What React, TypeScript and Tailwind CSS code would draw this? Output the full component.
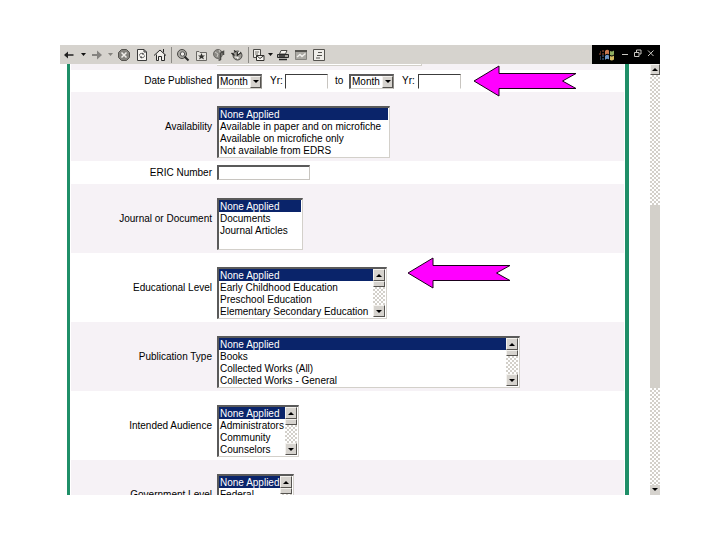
import React from "react";

const dither =
  "bg-[conic-gradient(#d3d0ca_25%,#ffffff_0_50%,#d3d0ca_0_75%,#ffffff_0)] bg-[length:4px_4px]";

function Caret({ up = false }: { up?: boolean }) {
  return (
    <svg viewBox="0 0 6 3" className="h-[3px] w-[6px]" aria-hidden="true">
      <path d={up ? "M3 0L6 3H0Z" : "M0 0H6L3 3Z"} fill="#000" />
    </svg>
  );
}

const bevel =
  "flex items-center justify-center bg-[#d6d3ce] border border-t-[#f4f2ee] border-l-[#f4f2ee] border-b-[#55534f] border-r-[#55534f]";

function ListScroll() {
  return (
    <div className="flex w-3 shrink-0 flex-col">
      <button type="button" aria-label="Scroll up" className={`h-3 w-3 ${bevel}`}>
        <Caret up />
      </button>
      <div className={`h-[6px] ${bevel}`} />
      <div className={`flex-1 ${dither}`} />
      <button type="button" aria-label="Scroll down" className={`h-3 w-3 ${bevel}`}>
        <Caret />
      </button>
    </div>
  );
}

type ListProps = { id: string; options: string[]; width: string; scroll?: boolean };

function ListBox({ id, options, width, scroll = false }: ListProps) {
  return (
    <div
      className={`mt-[14px] mb-[3px] flex h-[52px] border border-t-2 border-l-2 border-t-[#5a5a5a] border-l-[#5a5a5a] border-r-[#d3d0ca] border-b-[#d3d0ca] bg-white pr-px pb-px ${width}`}
    >
      <select
        id={id}
        size={4}
        defaultValue={options[0]}
        className="h-12 min-w-0 flex-1 appearance-none overflow-hidden bg-white p-0 text-[10px] leading-3 text-black outline-none"
      >
        {options.map((o) => (
          <option
            key={o}
            value={o}
            className="h-3 min-h-0 px-px pt-px pb-0 leading-[11px] checked:bg-[#0a246a] checked:text-white"
          >
            {o}
          </option>
        ))}
      </select>
      {scroll && <ListScroll />}
    </div>
  );
}

type RowProps = {
  label: string;
  id: string;
  tinted?: boolean;
  className?: string;
  children: React.ReactNode;
};

function Row({ label, id, tinted = false, className = "", children }: RowProps) {
  return (
    <div
      className={`relative mx-px flex shrink-0 items-center gap-[5px] ${tinted ? "bg-[#f6f2f6]" : "bg-white"} ${className}`}
    >
      <label htmlFor={id} className="w-[141px] shrink-0 text-right whitespace-nowrap">
        {label}
      </label>
      {children}
    </div>
  );
}

function MonthSelect({ id, label }: { id: string; label: string }) {
  return (
    <div className="flex h-[15px] w-[45px] border border-t-2 border-l-2 border-t-[#5a5a5a] border-l-[#5a5a5a] border-r-[#8c8a86] border-b-[#d3d0ca] bg-white">
      <select
        id={id}
        aria-label={label}
        className="min-w-0 flex-1 appearance-none bg-white pl-px text-[10px] leading-3 outline-none"
      >
        <option>Month</option>
      </select>
      <span className={`w-[11px] shrink-0 ${bevel}`}>
        <Caret />
      </span>
    </div>
  );
}

function YearInput({ id }: { id: string }) {
  return (
    <input
      id={id}
      className="h-[15px] w-[43px] border border-t-[#3c3c3c] border-l-[#3c3c3c] border-r-[#c8c5c0] border-b-white bg-white px-px outline-none"
    />
  );
}

function Pointer({ className }: { className: string }) {
  return (
    <svg viewBox="0 0 104 32" className={`absolute z-10 h-8 w-[104px] ${className}`} aria-hidden="true">
      <path
        d="M1 16L26 1V8.500H103L89.500 16L103 23.500H26V31Z"
        fill="#ff00ff"
        stroke="#1a001a"
        strokeWidth="1"
      />
    </svg>
  );
}

function Tool({
  label,
  width = "w-[18px]",
  children,
}: {
  label: string;
  width?: string;
  children: React.ReactNode;
}) {
  return (
    <button type="button" aria-label={label} className={`flex h-full shrink-0 items-center justify-center ${width}`}>
      {children}
    </button>
  );
}

function Glyph({ children }: { children: React.ReactNode }) {
  return (
    <svg viewBox="0 0 14 14" className="h-[14px] w-[14px]" fill="none" aria-hidden="true">
      {children}
    </svg>
  );
}

function SmallCaret({ color }: { color: string }) {
  return (
    <svg viewBox="0 0 5 3" className="h-[3px] w-[5px]" aria-hidden="true">
      <path d="M0 0H5L2.500 3Z" fill={color} />
    </svg>
  );
}

function Divider({ width }: { width: string }) {
  return (
    <span className={`flex shrink-0 justify-center ${width}`}>
      <span className="h-4 w-px bg-[#8c8a86]" />
    </span>
  );
}

function Toolbar() {
  return (
    <div className="flex h-[19px] shrink-0 items-center bg-[#d6d3ce]">
      <Tool label="Back">
        <Glyph>
          <path d="M3 7H11.500" stroke="#222" strokeWidth="1.500" />
          <path d="M2 7L6 3.500V10.500Z" fill="#222" />
        </Glyph>
      </Tool>
      <Tool label="Back history" width="w-[10px]">
        <SmallCaret color="#111" />
      </Tool>
      <Tool label="Forward">
        <Glyph>
          <path d="M2 7H9" stroke="#858380" strokeWidth="2" />
          <path d="M12 7L7 2.500V11.500Z" fill="#858380" />
        </Glyph>
      </Tool>
      <Tool label="Forward history" width="w-[9px]">
        <SmallCaret color="#85837f" />
      </Tool>
      <Tool label="Stop">
        <Glyph>
          <path d="M4.500 1.500H9.500L12.500 4.500V9.500L9.500 12.500H4.500L1.500 9.500V4.500Z" fill="#85837e" stroke="#55534f" />
          <path d="M4.500 4.500L9.500 9.500M9.500 4.500L4.500 9.500" stroke="#f0eeea" strokeWidth="1.500" />
        </Glyph>
      </Tool>
      <Tool label="Refresh">
        <Glyph>
          <path d="M2.500 1.500H9L11.500 4V12.500H2.500Z" fill="#f7f5f1" stroke="#3b3b3b" />
          <path d="M9 1.500V4H11.500" stroke="#3b3b3b" />
          <path d="M4.500 7.500C4.500 5 7 5 8.500 6M9.500 7.500C9.500 10 7 10 5.500 9" stroke="#555" />
          <path d="M7.500 4.500L9.500 6.500H7ZM6.500 10.800L4.500 8.500H7Z" fill="#444" />
        </Glyph>
      </Tool>
      <Tool label="Home">
        <Glyph>
          <path d="M3 7V12.500H11.500V7L7 3Z" fill="#efede9" />
          <path d="M1 7.500L7 2L13 7.500M3.500 6.500V12.500M11.500 6.500V12.500M3.500 12.500H5.500V8.500H8.500V12.500H11.500M10.500 1V4.500" stroke="#292929" />
        </Glyph>
      </Tool>
      <Divider width="w-[5px]" />
      <Tool label="Search">
        <Glyph>
          <circle cx="6" cy="6" r="4.500" fill="#aaa8a3" stroke="#4a4946" />
          <circle cx="6.500" cy="6" r="2.200" fill="#efede9" stroke="#555" />
          <path d="M8.500 8.500L12.500 12.500" stroke="#292929" strokeWidth="2" />
        </Glyph>
      </Tool>
      <Tool label="Favorites">
        <Glyph>
          <path d="M2.500 12.500V3.500H5L6 4.500H12.500V12.500H2.500Z" fill="#e6e4df" stroke="#6a6864" />
          <path d="M7.500 5L8.500 7.500H11L9 9L10 11.500L7.500 10L5 11.500L6 9L4 7.500H6.500Z" fill="#33322f" />
        </Glyph>
      </Tool>
      <Tool label="Media">
        <Glyph>
          <circle cx="6" cy="6" r="4.500" fill="#8c8a85" stroke="#6a6864" />
          <path d="M3 4L6 6L5 9M7 2L9 6" stroke="#c8c6c1" />
          <path d="M8.500 5V12M8.500 5L11.500 3.500V7M6.500 12H8.500" stroke="#4a4946" strokeWidth="1.500" />
        </Glyph>
      </Tool>
      <Tool label="History">
        <Glyph>
          <circle cx="7.500" cy="7.500" r="4.500" fill="#9c9a95" stroke="#4a4946" />
          <path d="M7.500 4V7L11 4.500M1.500 5L4.500 7.500M4 2.500L6 4" stroke="#252422" strokeWidth="1.500" />
          <path d="M5 9L8 9.500L7.500 11M8 5.500L10 3.500" stroke="#f4f2ee" strokeWidth="1.200" />
        </Glyph>
      </Tool>
      <Divider width="w-[4px]" />
      <Tool label="Mail" width="w-[16px]">
        <Glyph>
          <path d="M2.500 1.500H9.500V9.500H2.500Z" fill="#efede9" stroke="#4a4946" />
          <path d="M4 4H8M4 6H7" stroke="#77756f" />
          <path d="M5.500 7.500H13V12.500H5.500Z" fill="#f7f5f1" stroke="#33322f" />
          <path d="M5.500 7.500L9 10.500L13 7.500" stroke="#33322f" />
        </Glyph>
      </Tool>
      <Tool label="Mail options" width="w-[8px]">
        <SmallCaret color="#111" />
      </Tool>
      <Tool label="Print">
        <Glyph>
          <path d="M5 2.500H11L9.500 6H3.500Z" fill="#f7f5f1" stroke="#4a4946" />
          <path d="M1.500 6.500H12.500V9.500H1.500Z" fill="#a5a39e" stroke="#292929" />
          <path d="M3 8H9M3 11.500H11" stroke="#292929" strokeWidth="1.500" />
        </Glyph>
      </Tool>
      <Tool label="Edit">
        <Glyph>
          <path d="M1.500 2.500H12.500V11.500H1.500Z" fill="#aaa8a3" stroke="#85837e" />
          <path d="M1 3H13" stroke="#55534f" strokeWidth="2" />
          <path d="M3 9L6 6.500L8 8.500L11.500 5.500" stroke="#efede9" strokeWidth="1.500" />
        </Glyph>
      </Tool>
      <Tool label="Discuss">
        <Glyph>
          <path d="M1.500 1.500H12.500V12.500H1.500Z" fill="#efede9" stroke="#55534f" />
          <path d="M6 4.500H10M5 7.500H10M4 10H8" stroke="#55534f" />
        </Glyph>
      </Tool>
      <div className="ml-auto flex h-full w-[68px] items-center bg-black pl-[7px]">
        <svg viewBox="0 0 16 14" className="h-[14px] w-4" aria-hidden="true">
          <path d="M6 3Q8 1 10 2.500V6.500Q8 5 6 7Z" fill="#c9764e" />
          <path d="M11 3Q13 4 15 2.500V6.500Q13 8 11 7Z" fill="#8fae62" />
          <path d="M6 8Q8 6 10 7.500V11.500Q8 10 6 12Z" fill="#6c93c4" />
          <path d="M11 8Q13 9 15 7.500V11.500Q13 13 11 12Z" fill="#d3bb62" />
          <path d="M1 4H2M3 3H5M0 6H2M3 6H5" stroke="#a9583f" />
          <path d="M1 9H2M3 8H5M1 11H2M3 11H5" stroke="#4f74a6" />
        </svg>
        <button type="button" aria-label="Minimize" className="ml-[6px] flex h-full w-[13px] items-center pb-[4px]">
          <svg viewBox="0 0 8 8" className="h-2 w-2" aria-hidden="true">
            <path d="M1 5.500H7" stroke="#c9c7c2" />
          </svg>
        </button>
        <button type="button" aria-label="Restore" className="flex h-full w-[13px] items-center pb-[4px]">
          <svg viewBox="0 0 8 8" className="h-2 w-2" fill="none" aria-hidden="true">
            <path d="M2.500 3V1H7V5H5.500M0.500 3.500H5V7.500H0.500Z" stroke="#c9c7c2" />
          </svg>
        </button>
        <button type="button" aria-label="Close" className="flex h-full w-[10px] items-center pb-[4px]">
          <svg viewBox="0 0 8 8" className="h-2 w-2" aria-hidden="true">
            <path d="M1 1.500L6.500 7M6.500 1.500L1 7" stroke="#c9c7c2" />
          </svg>
        </button>
      </div>
    </div>
  );
}

export default function App() {
  return (
    <div className="flex h-screen flex-col overflow-hidden bg-white px-[60px] py-[45px] font-['Liberation_Sans',Arial,sans-serif] text-[10px] leading-3 text-black">
      <Toolbar />
      <div className="flex min-h-0 flex-1 pl-[7px]">
        <form className="flex min-w-0 flex-1 flex-col overflow-hidden border-r-4 border-l-[3px] border-[#1f8f68]">
          <div className="mx-px h-[6px] shrink-0 bg-[#f6f2f6] pl-[146px]">
            <div className="h-[2px] w-[205px] border-r border-b border-[#d3d0ca] bg-white" />
          </div>
          <Row label="Date Published" id="month-from" className="h-[22px]">
            <MonthSelect id="month-from" label="From month" />
            <div className="flex flex-1 items-center">
              <label htmlFor="year-from" className="w-[18px] pl-[3px]">Yr:</label>
              <YearInput id="year-from" />
              <label htmlFor="month-to" className="w-[21px] pl-[7px]">to</label>
              <MonthSelect id="month-to" label="To month" />
              <label htmlFor="year-to" className="w-6 pl-2">Yr:</label>
              <YearInput id="year-to" />
            </div>
            <Pointer className="-top-[5px] left-[402px]" />
          </Row>
          <Row label="Availability" id="availability" tinted>
            <ListBox
              id="availability"
              width="w-[173px]"
              options={[
                "None Applied",
                "Available in paper and on microfiche",
                "Available on microfiche only",
                "Not available from EDRS",
              ]}
            />
          </Row>
          <Row label="ERIC Number" id="eric" className="h-[23px]">
            <input
              id="eric"
              className="h-[15px] w-[93px] border border-t-2 border-l-2 border-t-[#5a5a5a] border-l-[#5a5a5a] border-r-[#c8c5c0] border-b-[#c8c5c0] bg-white px-px outline-none"
            />
          </Row>
          <Row label="Journal or Document" id="journal" tinted>
            <ListBox
              id="journal"
              width="w-[86px]"
              options={["None Applied", "Documents", "Journal Articles"]}
            />
          </Row>
          <Row label="Educational Level" id="level">
            <ListBox
              id="level"
              width="w-[170px]"
              scroll
              options={[
                "None Applied",
                "Early Childhood Education",
                "Preschool Education",
                "Elementary Secondary Education",
              ]}
            />
            <Pointer className="top-[4px] left-[336px]" />
          </Row>
          <Row label="Publication Type" id="pubtype" tinted>
            <ListBox
              id="pubtype"
              width="w-[303px]"
              scroll
              options={["None Applied", "Books", "Collected Works (All)", "Collected Works - General"]}
            />
          </Row>
          <Row label="Intended Audience" id="audience">
            <ListBox
              id="audience"
              width="w-[82px]"
              scroll
              options={["None Applied", "Administrators", "Community", "Counselors"]}
            />
          </Row>
          <Row label="Government Level" id="government" tinted>
            <ListBox
              id="government"
              width="w-[77px]"
              scroll
              options={["None Applied", "Federal", "Local", "State"]}
            />
          </Row>
        </form>
        <div className="ml-[21px] flex w-[10px] shrink-0 flex-col">
          <button type="button" aria-label="Scroll page up" className={`h-[11px] shrink-0 ${bevel}`}>
            <Caret up />
          </button>
          <div className={`flex-[130] ${dither}`} />
          <div className="flex-[182] bg-[#d3d0ca]" />
          <div className={`flex-[97] ${dither}`} />
          <button type="button" aria-label="Scroll page down" className="flex h-[10px] shrink-0 items-center justify-center bg-[#d6d3ce]">
            <Caret />
          </button>
        </div>
      </div>
    </div>
  );
}
